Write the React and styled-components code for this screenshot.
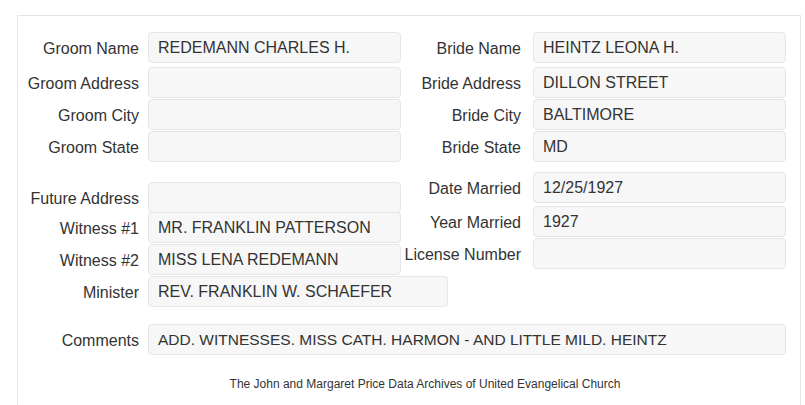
import React from "react";
import styled, { createGlobalStyle } from "styled-components";

const Global = createGlobalStyle`
  html, body { margin: 0; padding: 0; background: #fff; }
  body { font-family: "Liberation Sans", Arial, sans-serif; color: #333; }
`;

const Panel = styled.div`
  margin: 15px 0 0 17px;
  width: 784px;
  min-height: 400px;
  border: 1px solid #e5e5e5;
  border-bottom: none;
  padding-top: 16px;
  box-sizing: border-box;
`;

const Columns = styled.div`
  display: grid;
  grid-template-columns: 383px 385px;
`;

const Column = styled.div`
  display: flex;
  flex-direction: column;
`;

const Row = styled.div`
  display: grid;
  grid-template-columns: ${(p) => p.$labelW}px ${(p) => p.$inputW}px;
  column-gap: ${(p) => p.$gap}px;
  align-items: center;
  height: 31px;
  margin-top: ${(p) => p.$mt || 0}px;
`;

const Label = styled.label`
  text-align: right;
  font-size: 16px;
  line-height: 20px;
  white-space: nowrap;
  padding-top: 2px;
  color: #333;
`;

const Value = styled.div`
  height: 31px;
  box-sizing: border-box;
  background: #f7f7f7;
  border: 1px solid #e6e6e6;
  border-radius: 4px;
  padding: 0 9px;
  font-size: ${(p) => p.$fs || 16}px;
  line-height: 29px;
  color: #333;
  white-space: nowrap;
  overflow: hidden;
`;

const Footer = styled.div`
  text-align: center;
  font-size: 12px;
  color: #333;
  padding-left: 32px;
  margin-top: 22px;
`;

const Field = ({ label, value, side, mt, inputW = 253, fs }) => (
  <Row
    $labelW={side === "left" ? 121 : 120}
    $gap={side === "left" ? 9 : 12}
    $inputW={inputW}
    $mt={mt}
  >
    <Label>{label}</Label>
    <Value $fs={fs}>{value}</Value>
  </Row>
);

export default function App() {
  return (
    <>
      <Global />
      <Panel>
        <Columns>
          <Column>
            <Field side="left" label="Groom Name" value="REDEMANN CHARLES H." />
            <Field side="left" label="Groom Address" value="" mt={4} />
            <Field side="left" label="Groom City" value="" mt={1} />
            <Field side="left" label="Groom State" value="" mt={1} />
            <Field side="left" label="Future Address" value="" mt={20} />
            <Field side="left" label="Witness #1" value="MR. FRANKLIN PATTERSON" mt={-1} />
            <Field side="left" label="Witness #2" value="MISS LENA REDEMANN" mt={1} />
            <Field side="left" label="Minister" value="REV. FRANKLIN W. SCHAEFER" mt={1} inputW={300} />
          </Column>
          <Column>
            <Field side="right" label="Bride Name" value="HEINTZ LEONA H." />
            <Field side="right" label="Bride Address" value="DILLON STREET" mt={4} />
            <Field side="right" label="Bride City" value="BALTIMORE" mt={1} />
            <Field side="right" label="Bride State" value="MD" mt={1} />
            <Field side="right" label="Date Married" value="12/25/1927" mt={10} />
            <Field side="right" label="Year Married" value="1927" mt={3} />
            <Field side="right" label="License Number" value="" mt={1} />
          </Column>
        </Columns>
        <Field
          side="left"
          label="Comments"
          value="ADD. WITNESSES. MISS CATH. HARMON - AND LITTLE MILD. HEINTZ"
          mt={17}
          inputW={638}
          fs={15.5}
        />
        <Footer>The John and Margaret Price Data Archives of United Evangelical Church</Footer>
      </Panel>
    </>
  );
}
